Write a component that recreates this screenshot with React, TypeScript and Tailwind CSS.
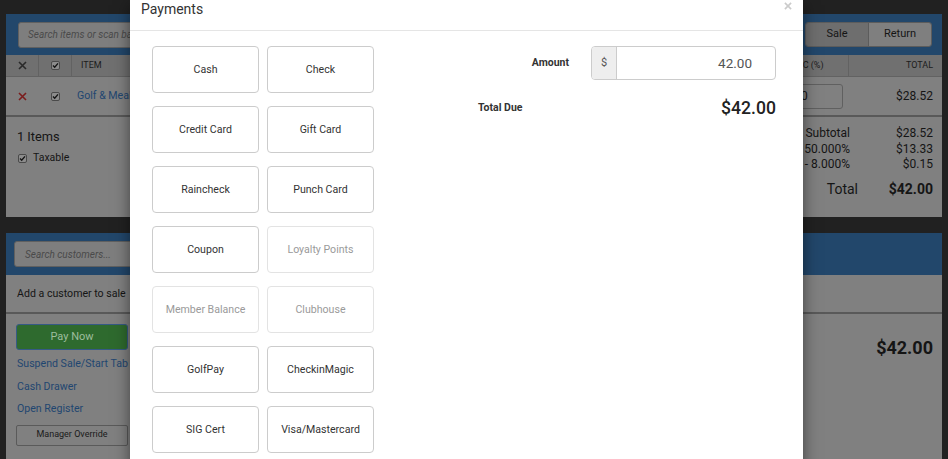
import React from 'react'

const FONT = { fontFamily: 'Roboto, "Liberation Sans", Arial, sans-serif' }

function Check() {
  return (
    <svg width="9" height="9" viewBox="0 0 9 9" className="shrink-0">
      <rect x="0.5" y="0.5" width="8" height="8" rx="1.5" fill="#8c8c8c" stroke="#4a4a4a" />
      <path d="M2 4.6 L3.7 6.3 L7 2.4" fill="none" stroke="#151515" strokeWidth="1.4" />
    </svg>
  )
}

function Cross({ color, size = 9, width = 1.6 }: { color: string; size?: number; width?: number }) {
  return (
    <svg width={size} height={size} viewBox="0 0 9 9">
      <path d="M1 1 L8 8 M8 1 L1 8" stroke={color} strokeWidth={width} />
    </svg>
  )
}

const methods: { label: string; disabled?: boolean }[] = [
  { label: 'Cash' },
  { label: 'Check' },
  { label: 'Credit Card' },
  { label: 'Gift Card' },
  { label: 'Raincheck' },
  { label: 'Punch Card' },
  { label: 'Coupon' },
  { label: 'Loyalty Points', disabled: true },
  { label: 'Member Balance', disabled: true },
  { label: 'Clubhouse', disabled: true },
  { label: 'GolfPay' },
  { label: 'CheckinMagic' },
  { label: 'SIG Cert' },
  { label: 'Visa/Mastercard' },
]

function PaymentsModal() {
  return (
    <div className="absolute left-[130px] top-0 w-[673px] h-[470px] bg-white shadow-[0_5px_15px_rgba(0,0,0,0.5)]">
      {/* header */}
      <div className="relative h-[31px] border-b border-[#e5e5e5] pl-[11px]">
        <h4 className="text-[14px] leading-[18px] text-[#333]">Payments</h4>
        <button className="absolute left-[654px] top-[2px]" aria-label="Close">
          <Cross color="#cbcbcb" size={8} width={1.8} />
        </button>
      </div>

      {/* body */}
      <div className="flex pl-[22px] pt-[15px]">
        <div className="grid grid-cols-[107px_107px] gap-x-[8px] gap-y-[13px]">
          {methods.map((m) => (
            <button
              key={m.label}
              className={
                m.disabled
                  ? 'h-[47px] rounded-[4px] border border-[#e3e3e3] bg-white text-[10.6px] text-[#9a9a9a]'
                  : 'h-[47px] rounded-[4px] border border-[#cccccc] bg-white text-[10.6px] text-[#333]'
              }
            >
              {m.label}
            </button>
          ))}
        </div>

        <div className="ml-[104px] w-[298px]">
          <div className="flex items-center h-[34px]">
            <label className="flex-1 text-right pr-[22px] text-[10.5px] font-bold text-[#333]">Amount</label>
            <div className="flex w-[185px] h-[34px] rounded-[4px] border border-[#cccccc] overflow-hidden">
              <span className="w-[25px] flex items-center justify-center bg-[#eeeeee] border-r border-[#cccccc] text-[11px] text-[#555]">$</span>
              <span className="flex-1 flex items-center justify-end pr-[23px] text-[13.5px] text-[#555]">42.00</span>
            </div>
          </div>
          <div className="flex items-center justify-between h-[24px] mt-[16px]">
            <span className="text-[10.5px] font-bold text-[#333]">Total Due</span>
            <span className="text-[17.6px] font-medium text-[#222]">$42.00</span>
          </div>
        </div>
      </div>
    </div>
  )
}

function SalePanel() {
  return (
    <div className="h-[203px] bg-[#808080] flex flex-col">
      <div className="h-[41px] bg-[#22476b] flex items-center justify-between pl-[12px] pr-[10px]">
        <div className="w-[520px] h-[26px] rounded-[3px] bg-[#7e7e7e] border border-[#606060] flex items-center pl-[9px]">
          <span className="italic text-[10px] text-[#4a4a4a]">Search items or scan barcode...</span>
        </div>
        <div className="flex h-[25px] rounded-[3px] border border-[#5c5c5c] overflow-hidden text-[11px] text-[#151515]">
          <span className="w-[63px] flex items-center justify-center bg-[#6e6e6e] border-r border-[#5c5c5c]">Sale</span>
          <span className="w-[62px] flex items-center justify-center bg-[#7f7f7f]">Return</span>
        </div>
      </div>

      {/* table header */}
      <div className="h-[22px] bg-[#707070] border-b border-[#626262] flex text-[9px] text-[#1c1c1c] uppercase">
        <div className="w-[33px] border-r border-[#626262] flex items-center justify-center"><Cross color="#2a2a2a" /></div>
        <div className="w-[33px] border-r border-[#626262] flex items-center justify-center"><Check /></div>
        <div className="flex-1 flex items-center pl-[9px]">Item</div>
        <div className="w-[73px] border-r border-[#626262] flex items-center pl-[13px]">Disc (%)</div>
        <div className="w-[93px] flex items-center justify-end pr-[9px]">Total</div>
      </div>

      {/* item row */}
      <div className="h-[38px] flex text-[12px]">
        <div className="w-[33px] flex items-center justify-center"><Cross color="#7a1c1c" /></div>
        <div className="w-[33px] flex items-center justify-center"><Check /></div>
        <div className="flex-1 flex items-center pl-[5px] text-[10.6px] text-[#1f4670]">Golf &amp; Meal Package</div>
        <div className="w-[73px] flex items-center pl-[5px]">
          <div className="w-[62px] h-[25px] rounded-[3px] border border-[#606060] flex items-center pl-[19px] text-[#151515]">0</div>
        </div>
        <div className="w-[93px] flex items-center justify-end pr-[9px] text-[#151515]">$28.52</div>
      </div>

      <div className="h-[2px] bg-[#595959]" />

      {/* summary */}
      <div className="flex-1 flex justify-between text-[#151515]">
        <div className="pl-[11px] pt-[12px]">
          <div className="text-[12.8px] leading-[16px]">1 Items</div>
          <div className="flex items-center gap-[6px] mt-[6px] text-[10.5px] leading-[14px] pl-[1px]">
            <Check />
            <span>Taxable</span>
          </div>
        </div>
        <div className="pr-[9px] pt-[9px] text-[12px] leading-[15.5px]">
          <div className="flex justify-end"><span>Subtotal</span><span className="w-[83px] text-right">$28.52</span></div>
          <div className="flex justify-end"><span>Sales Tax - 50.000%</span><span className="w-[83px] text-right">$13.33</span></div>
          <div className="flex justify-end"><span>City Tax - 8.000%</span><span className="w-[83px] text-right">$0.15</span></div>
          <div className="flex justify-end mt-[6px] text-[14px] leading-[20px]">
            <span>Total</span>
            <span className="w-[75px] text-right font-bold">$42.00</span>
          </div>
        </div>
      </div>
    </div>
  )
}

function CustomerPanel() {
  return (
    <div className="flex-1 bg-[#808080] flex flex-col">
      <div className="h-[42px] bg-[#22476b] flex items-center pl-[8px]">
        <div className="w-[320px] h-[26px] rounded-[3px] bg-[#7e7e7e] border border-[#606060] flex items-center pl-[10px]">
          <span className="italic text-[10px] text-[#4a4a4a]">Search customers...</span>
        </div>
      </div>
      <div className="h-[37px] flex items-center pl-[11px] text-[10.6px] text-[#151515]">Add a customer to sale</div>
      <div className="h-[2px] bg-[#595959]" />
      <div className="flex justify-between">
        <div className="pl-[10px] pt-[10px] flex flex-col">
          <button className="w-[112px] h-[26px] rounded-[3px] bg-[#2e6a2e] border border-[#355a85] text-[11px] text-[#9dbd9d]">Pay Now</button>
          <div className="mt-[3px] text-[10.6px] text-[#1f4670] pl-[1px]">
            <div className="h-[22.5px] leading-[22px]">Suspend Sale/Start Tab</div>
            <div className="h-[22.5px] leading-[22px]">Cash Drawer</div>
            <div className="h-[22.5px] leading-[22px]">Open Register</div>
          </div>
          <button className="mt-[4px] w-[112px] h-[21px] rounded-[2px] bg-[#808080] border border-[#5a5a5a] text-[9px] text-[#1a1a1a]">Manager Override</button>
        </div>
        <div className="pr-[9px] pt-[22px] text-[18px] leading-[24px] font-bold text-[#151515]">$42.00</div>
      </div>
    </div>
  )
}

export default function App() {
  return (
    <div className="relative w-[948px] h-[459px] overflow-hidden bg-[#212121]" style={FONT}>
      <div className="h-full flex flex-col gap-[16px] pt-[14px] px-[6px]">
        <SalePanel />
        <CustomerPanel />
      </div>
      <PaymentsModal />
    </div>
  )
}
